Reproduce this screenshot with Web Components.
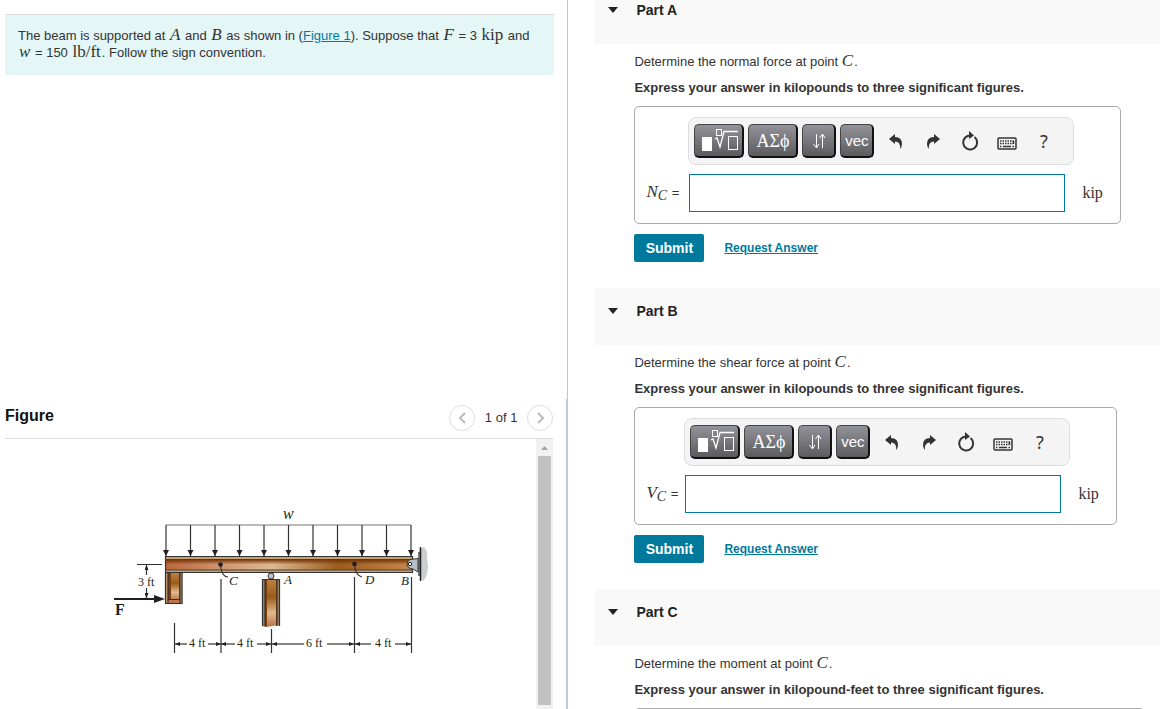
<!DOCTYPE html>
<html lang="en">
<head>
<meta charset="utf-8">
<title>Beam internal loadings</title>
<style>
  body { margin: 0; font: 13px/18px "Liberation Sans", Arial, sans-serif; color: #333; background: #fff; }
</style>
</head>
<body>
<problem-page></problem-page>

<script>
const define = (name, html, setup) => {
  const template = document.createElement('template');
  template.innerHTML = html;
  customElements.define(name, class extends HTMLElement {
    constructor() {
      super();
      this.attachShadow({ mode: 'open' }).append(template.content.cloneNode(true));
    }
    connectedCallback() { if (setup) setup(this, this.shadowRoot); }
  });
};

/* Symbols and units set in the serif face */
define('math-term', `
  <style>
    :host { font-family: "Liberation Serif", "Times New Roman", serif; font-size: 17px; line-height: 0; }
    :host([var]) { font-style: italic; padding: 0 1px 0 0; }
  </style><slot></slot>`);

define('problem-statement', `
  <style>
    :host { display: block; margin: 14px 13px 0 5px; padding: 12px 20px 14px 13px; border-top: 1px solid #ddd; background: #e4f6f6; line-height: 17px; }
    p { margin: 0; }
  </style><p><slot></slot></p>`);

define('beam-diagram', `
  <style>
    :host { display: block; }
    svg { display: block; }
    text { font-family: "Liberation Serif", "Times New Roman", serif; font-size: 12px; fill: #231f20; }
    .v { font-style: italic; font-size: 13px; }
    .w { font-style: italic; font-size: 16px; }
    .s { stroke: #333; stroke-width: 1.2; fill: none; }
  </style>
  <svg width="320" height="168" viewBox="110 490 320 168" role="img" aria-label="Beam with distributed load w, supported at A and B">
    <defs>
      <linearGradient id="web"><stop offset="0" stop-color="#b9663c"/><stop offset=".25" stop-color="#d09a72"/><stop offset=".43" stop-color="#dcba92"/><stop offset=".7" stop-color="#9a5c1c"/><stop offset="1" stop-color="#c48a50"/></linearGradient>
      <linearGradient id="post" x2="0" y2="1"><stop offset="0" stop-color="#bd8146"/><stop offset=".38" stop-color="#9a5b18"/><stop offset=".72" stop-color="#dfba91"/><stop offset="1" stop-color="#bd7448"/></linearGradient>
      <linearGradient id="shade" x2="0" y2="1"><stop offset="0" stop-color="#743207" stop-opacity=".9"/><stop offset=".45" stop-color="#743207" stop-opacity="0"/></linearGradient>
      <marker id="load" markerUnits="userSpaceOnUse" markerWidth="6" markerHeight="7" refX="6" refY="3" orient="auto"><path d="M0 0L6 3L0 6Z" fill="#231f20"/></marker>
      <marker id="dim" markerUnits="userSpaceOnUse" markerWidth="5" markerHeight="4" refX="5" refY="2" orient="auto-start-reverse"><path d="M0 0L5 2L0 4Z" fill="#231f20"/></marker>
    </defs>
    <g class="s" id="loads"><path d="M166 525H411" stroke="#777"/></g>
    <rect x="165.500" y="573" width="17" height="31" fill="#c99e72"/>
    <rect x="168" y="573" width="12" height="30" fill="#7d3e0b"/>
    <rect x="171" y="573" width="8" height="27" fill="url(#post)"/>
    <rect x="168" y="600" width="12" height="3" fill="#bd7448"/>
    <path d="M165.500 573V603.500H182V573M168 573V603M180 573V603M168 599.500H180" class="s"/>
    <path d="M262 579H280V626Q276 624 271 626T262 626Z" fill="#a28668"/>
    <path d="M265 579H277V626Q272 623 265 627Z" fill="#7d3e0b"/>
    <path d="M267 579H276V625Q272 627 267 626Z" fill="url(#post)"/>
    <path d="M262.500 626V579.500H279.500V626M265 580V626M277 580V626" class="s"/>
    <circle cx="271" cy="576" r="3" fill="#bcc0c8" stroke="#333"/>
    <rect x="165" y="556" width="248" height="17" fill="#c9a171"/>
    <rect x="165" y="560" width="248" height="10" fill="url(#web)"/>
    <rect x="165" y="560" width="248" height="10" fill="url(#shade)"/>
    <path d="M165.500 556.500H412.500V572.500H165.500Z" class="s"/>
    <path d="M165 559.500H413M165 570H413" stroke="#4a3d3a" fill="none"/>
    <path d="M419 550L424 547Q428 551 427 557L428 567Q427 578 423 581L420 577Z" fill="#cbcdd0"/>
    <rect x="418" y="552" width="2" height="24" fill="#777"/>
    <path d="M420.500 547V581" stroke="#231f20" stroke-width="1.500"/>
    <path d="M418 558.500L410 559.500Q407 561 407 564T410 568.500L413 569L418 572Z" fill="#b5bdc8" stroke="#333"/>
    <circle cx="410" cy="564" r="1.700" fill="#fff" stroke="#222"/>
    <circle cx="220.500" cy="564.500" r="2.300" fill="#231f20"/><circle cx="354.500" cy="564" r="2.300" fill="#231f20"/>
    <path class="s" d="M220.500 566Q222 577 228 577M354.500 566Q356 576 362 577"/>
    <path class="s" stroke-width="1" d="M137 564.500H162M174.500 623V653M221 579V653M271.500 629V653M354.500 577V653M411.500 577V653"/>
    <g class="s">
      <path d="M146.500 575V565" marker-end="url(#dim)"/><path d="M146.500 588V598" marker-end="url(#dim)"/>
      <path d="M187 644H175" marker-end="url(#dim)"/><path d="M208 644H221" marker-end="url(#dim)"/>
      <path d="M235 644H221" marker-end="url(#dim)"/><path d="M257 644H271" marker-end="url(#dim)"/>
      <path d="M304 644H272" marker-end="url(#dim)"/><path d="M327 644H354" marker-end="url(#dim)"/>
      <path d="M371 644H355" marker-end="url(#dim)"/><path d="M395 644H411" marker-end="url(#dim)"/>
    </g>
    <path d="M114 599H158" stroke="#231f20" stroke-width="2"/><path d="M154 595L165 599L154 603Z" fill="#231f20"/>
    <text class="w" x="283" y="519">w</text>
    <text class="v" x="229" y="585">C</text><text class="v" x="284" y="584">A</text>
    <text class="v" x="365" y="584">D</text><text class="v" x="401" y="585">B</text>
    <text x="138" y="586">3 ft</text><text x="189" y="647">4 ft</text><text x="237" y="647">4 ft</text>
    <text x="306" y="647">6 ft</text><text x="375" y="647">4 ft</text>
    <text x="115" y="615" style="font-size:16px;font-weight:bold">F</text>
  </svg>`, (host, root) => {
  const group = root.getElementById('loads');
  for (let i = 0; i <= 10; i++) {
    const line = document.createElementNS('http://www.w3.org/2000/svg', 'path');
    line.setAttribute('d', `M${166 + i * 24.5} 525V556`);
    line.setAttribute('marker-end', 'url(#load)');
    group.append(line);
  }
});

define('figure-panel', `
  <style>
    :host { display: flex; flex-direction: column; min-height: 0; padding: 0 13px 0 5px; border-right: 2px solid #bccbde; }
    header { display: flex; align-items: center; height: 39px; flex: none; border-bottom: 1px solid #ddd; }
    h2 { flex: 1; margin: 0; padding-bottom: 4px; font-size: 16px; line-height: 18px; color: #111; }
    button { display: grid; place-items: center; width: 26px; height: 26px; padding: 0; border: 1px solid #ddd; border-radius: 50%; background: #fff; }
    nav { display: flex; align-items: center; gap: 10px; }
    .view { display: flex; flex: 1; min-height: 0; overflow: hidden; }
    .canvas { flex: 1; padding: 51px 0 0 105px; }
    .bar { display: flex; flex-direction: column; width: 17px; padding-bottom: 4px; box-sizing: border-box; background: #f1f1f1; }
    .bar svg { flex: none; }
    .thumb { flex: 1; margin: 0 2px; background: #c1c1c1; }
  </style>
  <header>
    <h2>Figure</h2>
    <nav aria-label="Figures">
      <button type="button" aria-label="Previous figure"><svg width="12" height="14" fill="none" stroke="#bbb" stroke-width="2"><path d="M9 2L4 7L9 12"/></svg></button>
      <span>1 of 1</span>
      <button type="button" aria-label="Next figure"><svg width="12" height="14" fill="none" stroke="#bbb" stroke-width="2"><path d="M4 2L9 7L4 12"/></svg></button>
    </nav>
  </header>
  <div class="view">
    <div class="canvas"><beam-diagram></beam-diagram></div>
    <div class="bar"><svg width="17" height="17"><path d="M5 11L8.500 7L12 11Z" fill="#a3a3a3"/></svg><div class="thumb"></div></div>
  </div>`);

define('math-toolbar', `
  <style>
    :host { display: flex; align-items: center; height: 48px; padding: 0 5px; box-sizing: border-box; border: 1px solid #ddd; border-radius: 8px; background: #f4f4f4; }
    button { display: grid; place-items: center; padding: 0; height: 34px; width: 37px; border: 0; background: none; color: #333; font: 18px/20px "Noto Sans", sans-serif; }
    .key { flex: none; width: 34px; margin-right: 4px; border: 1px solid #444; border-right: 2px solid #111; border-bottom: 2px solid #111; border-radius: 5px; background: linear-gradient(#92929a, #5c5c5e); color: #fff; font: 15px/18px "Liberation Sans", sans-serif; }
    .wide { width: 50px; }
    .greek { font: 18px/20px "Liberation Serif", serif; }
    .icons { display: flex; margin-left: -1px; }
  </style>
  <button class="key wide" type="button" aria-label="Templates"><svg width="40" height="26" viewBox="0 3 40 26" fill="none" stroke="#fff"><rect x="3" y="12" width="10" height="14" fill="#fff" stroke="none"/><path d="M16 14L18 13L21 22L25 6.500H39" stroke-width="1.300"/><rect x="17.500" y="4.500" width="5" height="6"/><rect x="29.500" y="11.500" width="9" height="13"/></svg></button>
  <button class="key wide greek" type="button">ΑΣϕ</button>
  <button class="key" type="button" aria-label="Arrows"><svg width="14" height="18" fill="none" stroke="#fff"><path d="M4.500 2V15M1.500 12L4.500 16L7 12M10.500 16V3M7.500 6L10.500 2L13 6"/></svg></button>
  <button class="key" type="button">vec</button>
  <div class="icons">
    <button type="button" aria-label="Undo"><svg width="16" height="16" fill="#333"><path d="M1 6L7 1V4Q14 4 14 11Q14 14 12 16Q13 8.500 7 8.500V11Z"/></svg></button>
    <button type="button" aria-label="Redo"><svg width="16" height="16" fill="#333"><path d="M15 6L9 1V4Q2 4 2 11Q2 14 4 16Q3 8.500 9 8.500V11Z"/></svg></button>
    <button type="button" aria-label="Reset"><svg width="18" height="20"><path d="M13.500 6A7 7 0 1 1 6.500 5L10 4.500" fill="none" stroke="#333" stroke-width="2"/><path d="M8 0L13 4.500L8 8Z" fill="#333"/></svg></button>
    <button type="button" aria-label="Keyboard"><svg width="20" height="18" viewBox="0 -1 20 18" fill="none" stroke="#333"><rect x="1" y="5" width="18" height="11" rx="1" stroke-width="1.500"/><path d="M3 8H17M3 10.500H16" stroke-width="1.500" stroke-dasharray="1.500 1"/><path d="M3 13.500H4.500M6 13.500H14M15.500 13.500H17M16.500 8V11" stroke-width="1.500"/></svg></button>
    <button type="button" aria-label="Help">?</button>
  </div>`);

/* Bordered frame with the formula toolbar, the answer field and its unit */
define('answer-box', `
  <style>
    :host { display: grid; grid-template-columns: var(--symbol, 34px) 386px auto; column-gap: 8px; row-gap: 9px; width: fit-content; height: 118px; box-sizing: border-box; padding: 10px 17px 11px 11px; border: 1px solid #aaa; border-radius: 5px; align-items: center; }
    math-toolbar { grid-column: 2; }
    label { grid-column: 1; white-space: nowrap; }
    sub { font-size: 14px; vertical-align: -3px; }
    input { width: 376px; height: 38px; box-sizing: border-box; margin: 0 0 0 1px; padding: 0 8px; border: 1px solid #007a9c; border-radius: 0; font: inherit; }
    .unit { font-size: 16px; line-height: 18px; }
  </style>
  <math-toolbar></math-toolbar>
  <label for="answer"><math-term var><span id="symbol"></span><sub>C</sub></math-term> =</label>
  <input id="answer" type="text">
  <math-term class="unit">kip</math-term>`, (host, root) => {
  root.getElementById('symbol').textContent = host.getAttribute('symbol');
});

define('problem-part', `
  <style>
    :host { display: block; }
    header { display: flex; align-items: center; gap: 18px; padding: 14px 14px 25px; background: #f9f9f9; }
    :host([first]) header { padding-top: 1px; }
    h2 { margin: 0; font-size: 14px; line-height: 18px; color: #222; }
    .body { padding: 9px 0 26px 40px; }
    p { margin: 0 0 8px; }
    p + p { margin-bottom: 9px; }
    .actions { display: flex; align-items: center; gap: 20px; margin-top: 10px; font-weight: bold; }
    button { height: 28px; width: 70px; padding: 0; border: 0; border-radius: 2px; background: #007a9c; color: #fff; font: bold 14px/18px "Liberation Sans", sans-serif; }
    a { color: #007a9c; font-size: 12px; }
    .empty { height: 118px; width: 511px; box-sizing: border-box; border: 1px solid #aaa; border-radius: 5px; }
  </style>
  <header><svg width="10" height="6"><path d="M0 0H10L5 6Z" fill="#222"/></svg><h2></h2></header>
  <div class="body">
    <p><slot></slot></p>
    <p><b><slot name="format"></slot></b></p>
    <slot name="answer"><div class="empty"></div></slot>
    <div class="actions"><button type="button">Submit</button><a href="#answer">Request Answer</a></div>
  </div>`, (host, root) => {
  root.querySelector('h2').textContent = host.getAttribute('heading');
  if (!host.querySelector('[slot=answer]')) root.querySelector('.actions').remove();
});

define('problem-page', `
  <style>
    :host { display: grid; grid-template-columns: 49fr 51fr; height: 100vh; overflow: hidden; }
    .left { display: grid; grid-template-rows: 9fr 7fr; min-height: 0; min-width: 0; }
    .top { border-right: 1px solid #bcc4d8; }
    main { overflow: hidden; padding-left: 26px; min-width: 0; }
    a { color: #007a9c; }
    problem-statement math-term { padding: 0 1px; }
  </style>
  <div class="left">
    <div class="top">
      <problem-statement>The beam is supported at <math-term var>A</math-term> and <math-term var>B</math-term> as shown in (<a href="#figure">Figure 1</a>). Suppose that <math-term var>F</math-term> = 3 <math-term>kip</math-term> and <math-term var>w</math-term> = 150 <math-term>lb/ft</math-term>. Follow the sign convention.</problem-statement>
    </div>
    <figure-panel id="figure"></figure-panel>
  </div>
  <main>
    <problem-part first heading="Part A">Determine the normal force at point <math-term var>C</math-term>.
      <span slot="format">Express your answer in kilopounds to three significant figures.</span>
      <answer-box slot="answer" symbol="N"></answer-box>
    </problem-part>
    <problem-part heading="Part B">Determine the shear force at point <math-term var>C</math-term>.
      <span slot="format">Express your answer in kilopounds to three significant figures.</span>
      <answer-box slot="answer" symbol="V" style="--symbol: 30px"></answer-box>
    </problem-part>
    <problem-part heading="Part C">Determine the moment at point <math-term var>C</math-term>.
      <span slot="format">Express your answer in kilopound-feet to three significant figures.</span>
    </problem-part>
  </main>`);
</script>
</body>
</html>
